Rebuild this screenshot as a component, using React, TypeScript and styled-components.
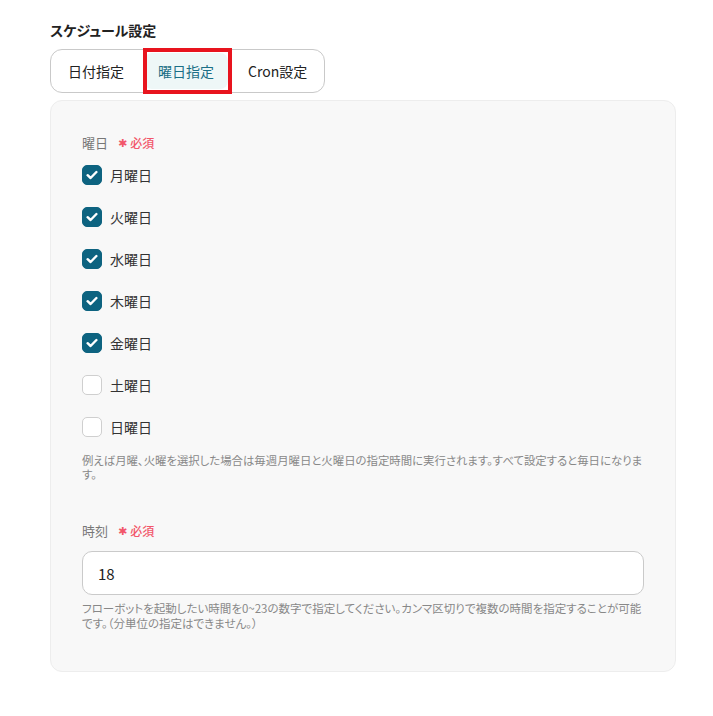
import React, { useState } from "react";
import styled, { createGlobalStyle } from "styled-components";

const GlobalStyle = createGlobalStyle`
  body {
    margin: 0;
    background: #ffffff;
    font-family: "Noto Sans CJK JP", "Noto Sans", sans-serif;
    color: #333;
  }
`;

const DAYS = ["月曜日", "火曜日", "水曜日", "木曜日", "金曜日", "土曜日", "日曜日"];
const TABS = ["日付指定", "曜日指定", "Cron設定"];

const App = () => {
  const [tab, setTab] = useState(1);
  const [checked, setChecked] = useState<boolean[]>([true, true, true, true, true, false, false]);
  const [hour, setHour] = useState("18");

  const toggle = (idx: number) => {
    setChecked((prev) => prev.map((v, i) => (i === idx ? !v : v)));
  };

  return (
    <Wrapper>
      <GlobalStyle />
      <Title>スケジュール設定</Title>
      <TabGroup>
        {TABS.map((name, idx) => (
          <Tab key={name} active={idx === tab} onClick={() => setTab(idx)}>
            {name}
            {idx === tab && <Highlight />}
          </Tab>
        ))}
      </TabGroup>

      <Panel>
        <FieldLabel>
          曜日
          <Required>
            <Star>✱</Star>必須
          </Required>
        </FieldLabel>
        <DayList>
          {DAYS.map((day, idx) => (
            <DayRow key={day} onClick={() => toggle(idx)}>
              <Box checked={checked[idx]}>
                {checked[idx] && (
                  <svg width="12" height="10" viewBox="0 0 12 10">
                    <polyline
                      points="1.6,5.2 4.6,8 10.4,2"
                      fill="none"
                      stroke="#fff"
                      strokeWidth="2.4"
                      strokeLinecap="round"
                      strokeLinejoin="round"
                    />
                  </svg>
                )}
              </Box>
              <DayName>{day}</DayName>
            </DayRow>
          ))}
        </DayList>
        <DayHelp>
          例えば月曜、火曜を選択した場合は毎週月曜日と火曜日の指定時間に実行されます。すべて設定すると毎日になります。
        </DayHelp>

        <TimeLabel>
          時刻
          <Required>
            <Star>✱</Star>必須
          </Required>
        </TimeLabel>
        <HourInput value={hour} onChange={(e) => setHour(e.target.value)} />
        <Help>
          フローボットを起動したい時間を0~23の数字で指定してください。カンマ区切りで複数の時間を指定することが可能です。（分単位の指定はできません。）
        </Help>
      </Panel>
    </Wrapper>
  );
};

export default App;

const Wrapper = styled.div`
  padding: 20px 0 40px 50px;
`;

const Title = styled.div`
  font-size: 14px;
  line-height: 20px;
  font-weight: 600;
  color: #222;
  font-feature-settings: "palt";
`;

const TabGroup = styled.div`
  display: inline-flex;
  gap: 6px;
  margin-top: 9px;
  padding: 3px;
  border: 1px solid #c9c9c9;
  border-radius: 12px;
  background: #fff;
`;

const Tab = styled.div<{ active: boolean }>`
  position: relative;
  display: flex;
  align-items: center;
  height: 36px;
  padding: 0 14px;
  border-radius: 8px;
  font-size: 14px;
  cursor: pointer;
  color: ${(p) => (p.active ? "#1b6f86" : "#222")};
  background: ${(p) => (p.active ? "#eef7f7" : "transparent")};
`;

const Highlight = styled.span`
  position: absolute;
  top: -5px;
  bottom: -5px;
  left: -1px;
  right: -4px;
  border: 4px solid #e8141e;
  pointer-events: none;
`;

const Panel = styled.div`
  box-sizing: border-box;
  width: 626px;
  margin-top: 7px;
  padding: 32px 31px 40px;
  background: #f8f8f8;
  border: 1px solid #ededed;
  border-radius: 12px;
`;

const FieldLabel = styled.div`
  display: flex;
  align-items: center;
  gap: 10px;
  height: 20px;
  font-size: 13px;
  line-height: 20px;
  color: #777;
`;

const TimeLabel = styled(FieldLabel)`
  margin-top: 40px;
`;

const Required = styled.span`
  display: inline-flex;
  align-items: center;
  gap: 3px;
  font-size: 12px;
  line-height: 20px;
  font-weight: 500;
  color: #f2566a;
`;

const Star = styled.span`
  font-family: "DejaVu Sans", sans-serif;
  font-size: 11px;
  line-height: 1;
`;

const DayList = styled.div`
  display: flex;
  flex-direction: column;
  gap: 22px;
  margin-top: 12px;
`;

const DayRow = styled.label`
  display: flex;
  align-items: center;
  gap: 8px;
  height: 20px;
  cursor: pointer;
`;

const Box = styled.span<{ checked: boolean }>`
  box-sizing: border-box;
  display: flex;
  align-items: center;
  justify-content: center;
  width: 20px;
  height: 20px;
  border-radius: 5px;
  background: ${(p) => (p.checked ? "#0d6380" : "#fff")};
  border: 1px solid ${(p) => (p.checked ? "#0d6380" : "#cfcfcf")};
`;

const DayName = styled.span`
  font-size: 14px;
  line-height: 20px;
  color: #333;
`;

const Help = styled.p`
  margin: 6px 0 0;
  font-size: 11.5px;
  line-height: 15px;
  color: #888;
  font-feature-settings: "palt";
`;

const DayHelp = styled(Help)`
  margin-top: 16px;
  font-size: 11.4px;
  line-height: 14px;
`;

const HourInput = styled.input`
  box-sizing: border-box;
  display: block;
  width: 100%;
  height: 44px;
  margin-top: 10px;
  padding: 0 15px;
  border: 1px solid #cacaca;
  border-radius: 10px;
  background: #fff;
  font-family: "Noto Sans CJK JP", "Noto Sans", sans-serif;
  font-size: 15px;
  color: #222;
  outline: none;
`;
